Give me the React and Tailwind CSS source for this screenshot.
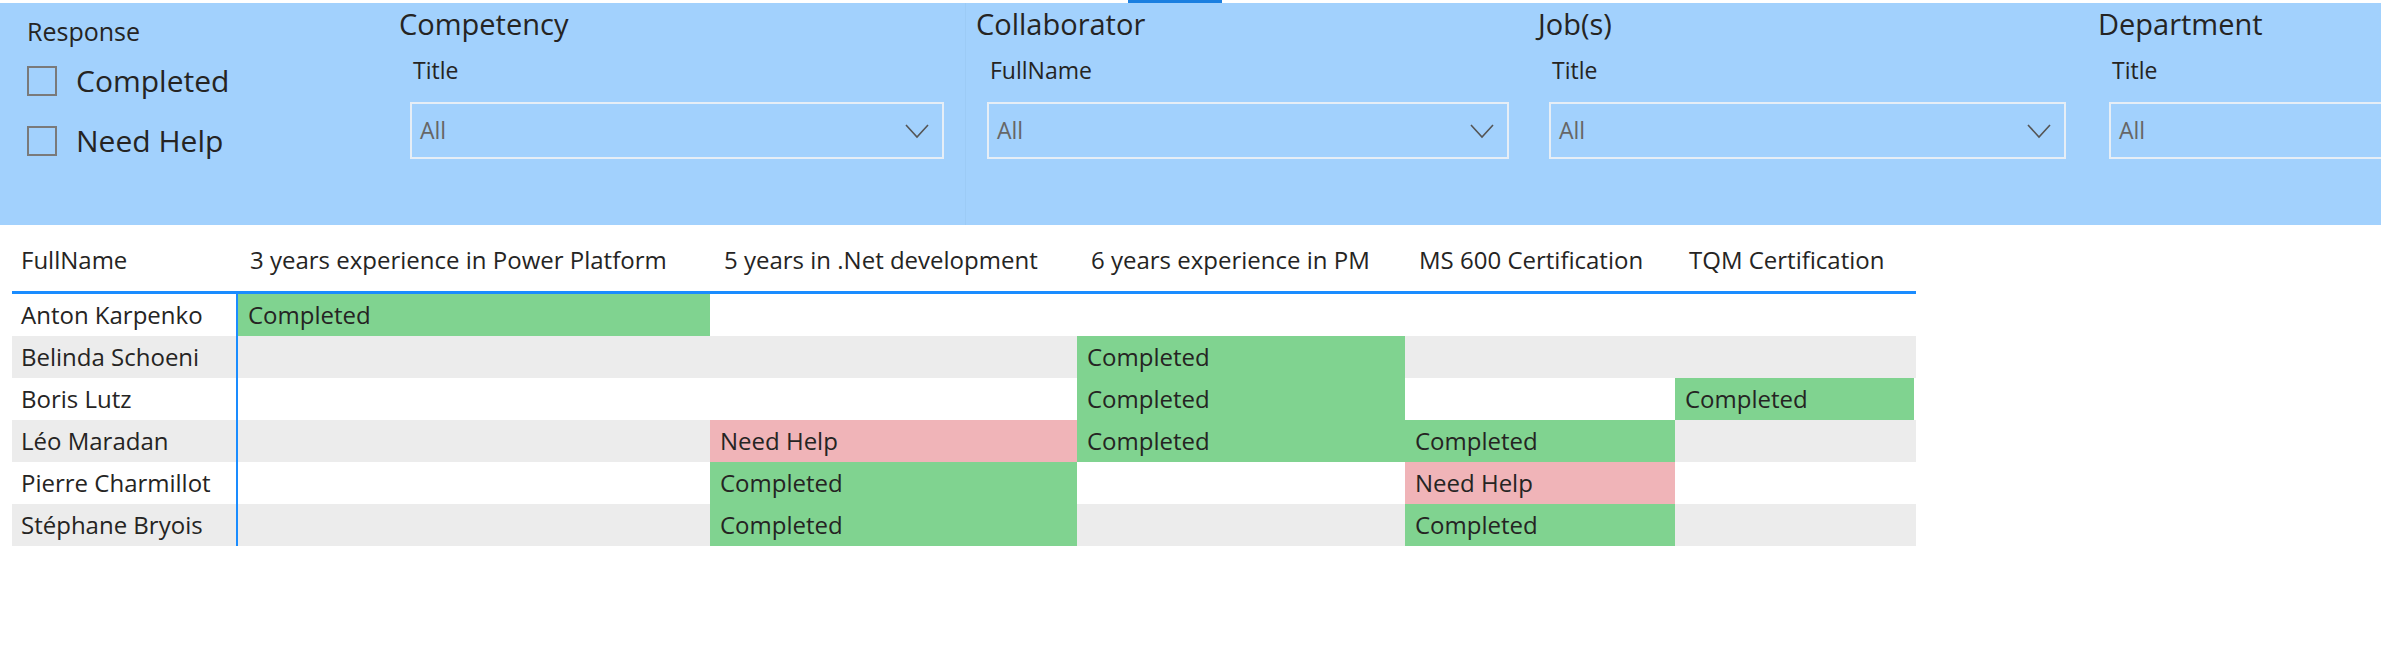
import React from 'react';

const Chevron = () => (
  <svg width="26" height="16" viewBox="0 0 26 16" fill="none" className="shrink-0">
    <path d="M2 2 L13 14 L24 2" stroke="#555" strokeWidth="1.6" />
  </svg>
);

const Slicer = ({ heading, label, width, boxWidth, last }) => (
  <div className={`flex flex-col shrink-0 ${last ? 'grow' : ''}`} style={{ width: last ? undefined : width }}>
    <div className="text-[29px] font-medium text-[#252423] leading-none mt-[6px]">{heading}</div>
    <div className="text-[23px] font-medium text-[#252423] leading-none mt-[21px] ml-[14px]">{label}</div>
    <div
      className="mt-[20px] ml-[11px] h-[57px] border-2 border-[#e6eef6] flex items-center justify-between pl-[8px] pr-[12px]"
      style={{ width: boxWidth }}
    >
      <span className="text-[23px] text-[#666]">All</span>
      {!last && <Chevron />}
    </div>
  </div>
);

const cols = [
  { name: '3 years experience in Power Platform', w: 474 },
  { name: '5 years in .Net development', w: 367 },
  { name: '6 years experience in PM', w: 328 },
  { name: 'MS 600 Certification', w: 270 },
  { name: 'TQM Certification', w: 239 },
];

const rows = [
  ['Anton Karpenko', ['C', '', '', '', '']],
  ['Belinda Schoeni', ['', '', 'C', '', '']],
  ['Boris Lutz', ['', '', 'C', '', 'C']],
  ['Léo Maradan', ['', 'N', 'C', 'C', '']],
  ['Pierre Charmillot', ['', 'C', '', 'N', '']],
  ['Stéphane Bryois', ['', 'C', '', 'C', '']],
];

export default function App() {
  return (
    <div className="w-[2381px] h-[651px] bg-white overflow-hidden" style={{ fontFamily: '"Open Sans", "Noto Sans", sans-serif' }}>
      <div className="h-[3px] flex">
        <div className="w-[1128px]" />
        <div className="w-[94px] bg-[#1b7fe0]" />
      </div>
      <div className="h-[222px] bg-[#a2d1fd] flex">
        <div className="w-[399px] shrink-0 pl-[27px] pt-[16px] border-r-0">
          <div className="text-[25px] font-medium text-[#252423] leading-none">Response</div>
          <div className="flex items-center gap-[19px] mt-[22px]">
            <div className="w-[30px] h-[30px] border-2 border-[#7a7a7a]" />
            <span className="text-[30px] text-[#252423] leading-none">Completed</span>
          </div>
          <div className="flex items-center gap-[19px] mt-[30px]">
            <div className="w-[30px] h-[30px] border-2 border-[#7a7a7a]" />
            <span className="text-[30px] text-[#252423] leading-none">Need Help</span>
          </div>
        </div>
        <Slicer heading="Competency" label="Title" width={566} boxWidth={534} />
        <div className="w-px bg-[#9ccbf6] shrink-0" />
        <div className="w-[10px] shrink-0" />
        <Slicer heading="Collaborator" label="FullName" width={562} boxWidth={522} />
        <Slicer heading="Job(s)" label="Title" width={560} boxWidth={517} />
        <Slicer heading="Department" label="Title" last boxWidth={300} />
      </div>

      <div className="ml-[12px] mt-[3px] w-[1904px] text-[24px] text-[#252423]">
        <div className="flex h-[66px] items-center border-b-[3px] border-[#1a8cff]">
          <div className="w-[226px] shrink-0 pl-[9px]">FullName</div>
          {cols.map((c) => (
            <div key={c.name} className="shrink-0 pl-[12px] whitespace-nowrap" style={{ width: c.w }}>{c.name}</div>
          ))}
        </div>
        {rows.map(([name, vals], i) => (
          <div key={name} className={`flex h-[42px] ${i % 2 ? 'bg-[#ececec]' : 'bg-white'}`}>
            <div className="w-[226px] shrink-0 pl-[9px] flex items-center border-r-2 border-[#1a8cff] whitespace-nowrap">{name}</div>
            {vals.map((v, j) => (
              <div
                key={j}
                className={`shrink-0 pl-[10px] flex items-center ${v === 'C' ? 'bg-[#80d390]' : v === 'N' ? 'bg-[#f0b4b8]' : ''}`}
                style={{ width: cols[j].w - (j === 0 ? 2 : 0) }}
              >
                {v === 'C' ? 'Completed' : v === 'N' ? 'Need Help' : ''}
              </div>
            ))}
          </div>
        ))}
      </div>
    </div>
  );
}
